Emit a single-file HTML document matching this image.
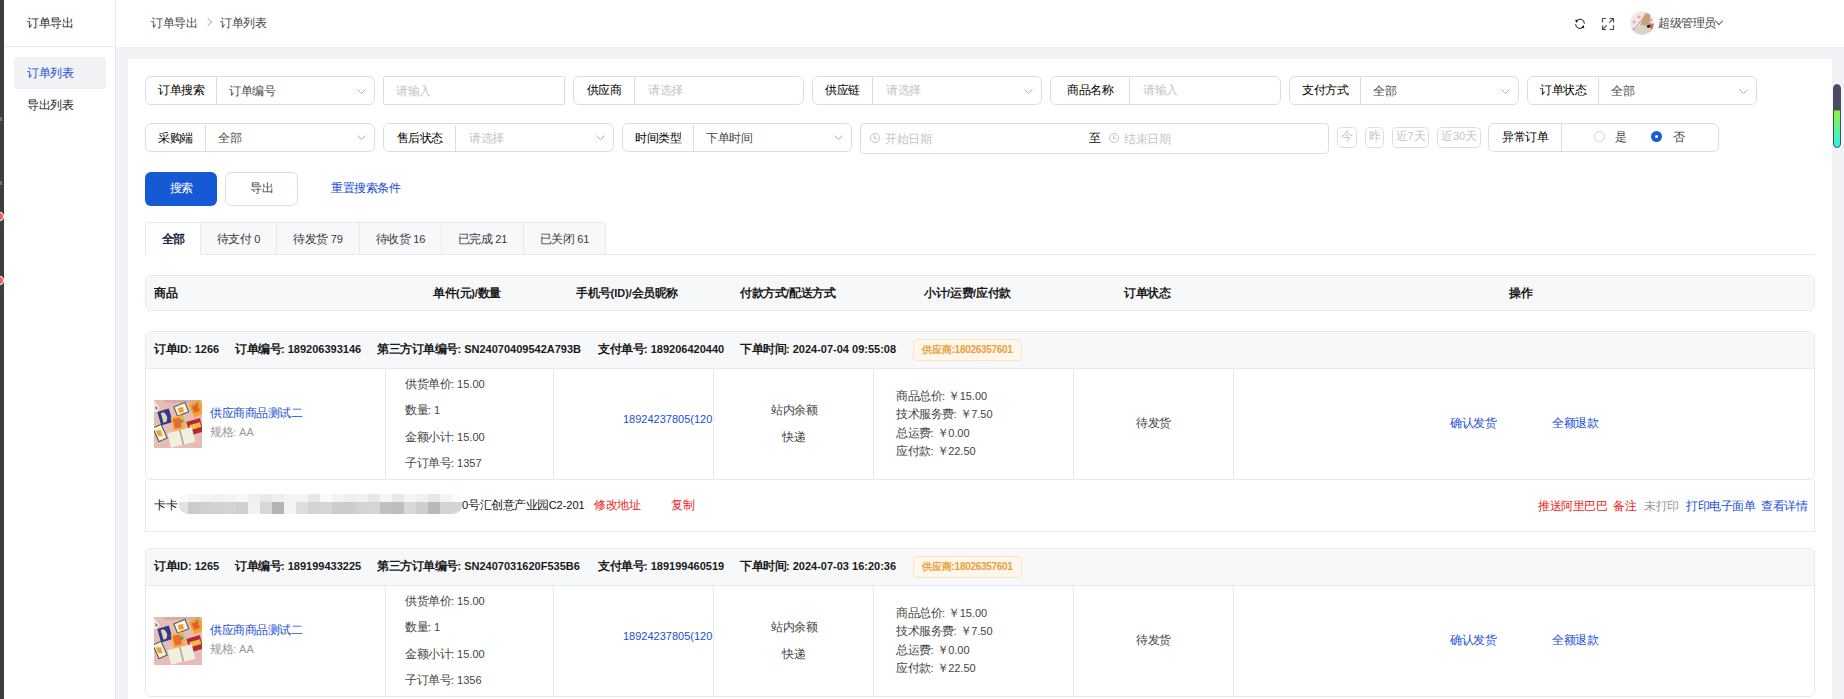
<!DOCTYPE html><html><head><meta charset="utf-8"><style>*{box-sizing:border-box;margin:0;padding:0}
html,body{width:1844px;height:699px;overflow:hidden;background:#f0f2f5}
body{font-family:"Liberation Sans",sans-serif;font-size:12px;color:#515a6e;position:relative;letter-spacing:-0.5px}
.a{position:absolute}
.t{position:absolute;white-space:nowrap;line-height:14px}
.n{font-size:11px;letter-spacing:0}
.c0{color:#111}
.c1{color:#222}
.c2{color:#444}
.ph{color:#c0c4cc}
.gray{color:#999}
.blue{color:#1a4ed8}
.red{color:#f01818}
.hb{font-weight:bold;color:#1a1a1a}
.grp{position:absolute;border:1px solid #dcdee2;border-radius:6px;background:#fff}
.grp .lb{position:absolute;left:0;top:-1px;bottom:0;border-right:1px solid #dcdee2;color:#000;text-align:center}
.grp .vl{position:absolute;top:-1px;color:#4a4a4a}
.grp .ph{position:absolute;top:-1px;color:#c0c4cc}
.arr{position:absolute;width:6px;height:6px;border-right:1px solid #a8abb2;border-bottom:1px solid #a8abb2;transform:rotate(45deg)}
.clk{width:10px;height:10px;border:1px solid #c0c4cc;border-radius:50%}
.clk:after{content:"";position:absolute;left:3px;top:1px;width:2px;height:3px;border-left:1px solid #c0c4cc;border-bottom:1px solid #c0c4cc}
.sbtn{border:1px solid #dcdee2;border-radius:5px;color:#c0c4cc;text-align:center;line-height:17px}
.tab{position:absolute;top:222px;border:1px solid #e8eaec;border-bottom:none;text-align:center;line-height:32px;color:#3a3a3a}
.tab.act{font-weight:bold;color:#17233d}
.tag{position:absolute;height:22px;border:1px solid #fde3c3;background:#fff6ec;border-radius:4px;color:#e9a03c;font-size:10px;font-weight:bold;letter-spacing:-0.3px;line-height:20px;text-align:center}
</style></head><body>
<div class="a" style="left:0px;top:0px;width:4px;height:699px;background:#3e3e3e"></div>
<div class="a" style="left:0px;top:181px;width:2px;height:4px;background:#6e6e6e"></div>
<div class="a" style="left:0px;top:117px;width:2px;height:4px;background:#6e6e6e"></div>
<div class="a" style="left:-4px;top:212px;width:8px;height:9px;border-radius:50%;background:#f26060;border:1px solid #fff"></div>
<div class="a" style="left:-4px;top:276px;width:8px;height:9px;border-radius:50%;background:#f26060;border:1px solid #fff"></div>
<div class="a" style="left:4px;top:0px;width:111px;height:699px;background:#fff"></div>
<div class="a" style="left:115px;top:0px;width:1px;height:699px;background:#e8eaec"></div>
<div class="a" style="left:4px;top:46px;width:111px;height:1px;background:#e8eaec"></div>
<div class="t c1" style="left:27px;top:16px;">订单导出</div>
<div class="a" style="left:14px;top:57px;width:92px;height:32px;background:#f0f2f5;border-radius:3px"></div>
<div class="t blue" style="left:27px;top:66px;">订单列表</div>
<div class="t c1" style="left:27px;top:98px;">导出列表</div>
<div class="a" style="left:116px;top:0px;width:1728px;height:47px;background:#fff"></div>
<div class="t c2" style="left:151px;top:16px;">订单导出</div>
<div class="a" style="left:205px;top:19px;width:6px;height:6px;border-top:1px solid #b8bcc4;border-right:1px solid #b8bcc4;transform:rotate(45deg)"></div>
<div class="t c2" style="left:220px;top:16px;">订单列表</div>
<svg class="a" style="left:1574px;top:18px" width="12" height="12" viewBox="0 0 12 12" fill="none" stroke="#1b1b2a" stroke-width="1">
<path d="M2.3 3.2 A4.4 4.4 0 0 1 10.4 5.6"/>
<path d="M9.6 8.6 A4.4 4.4 0 0 1 1.6 6.2"/>
<path d="M1.2 1.8 L4.6 2.2 L2.2 5.0Z" fill="#1b1b2a" stroke="none"/>
<path d="M10.4 10.2 L7.0 9.8 L9.6 7.0Z" fill="#1b1b2a" stroke="none"/></svg>
<svg class="a" style="left:1601px;top:17px" width="14" height="14" viewBox="0 0 14 14" fill="none" stroke="#505050" stroke-width="1.2">
<path d="M1.5 5.5V1.5H5"/><path d="M8.5 1.5H12.5V5.5"/><path d="M12.5 8V12.5H8.5"/><path d="M5 12.5H1.5V8.5"/>
<path d="M8.3 5.7L12.3 1.7"/><path d="M5.7 8.3L1.7 12.3"/></svg>
<svg class="a" style="left:1630px;top:11px" width="24" height="24" viewBox="0 0 24 24">
<defs><clipPath id="av"><circle cx="12" cy="12" r="11.8"/></clipPath></defs>
<g clip-path="url(#av)">
<rect width="24" height="24" fill="#f1e6e6"/>
<circle cx="9" cy="6" r="1.6" fill="#eea4a4"/><circle cx="4" cy="11" r="1.5" fill="#eea4a4"/><circle cx="3.5" cy="18" r="1.3" fill="#eea4a4"/><circle cx="21" cy="9" r="1.5" fill="#eea4a4"/>
<path d="M2 21 L17 2" stroke="#9aa2b4" stroke-width="1"/>
<path d="M15 2.5 L20.5 3 L19.5 12 L14 16 L10 14Z" fill="#c8a07a"/>
<path d="M2 24 L7 16 L12 13.5 L18 16 L22 22 L23 24Z" fill="#dbd4c6"/>
<path d="M19 12 L24 13 L24 24 L18 23 L21 19Z" fill="#b47c52"/>
<circle cx="18.6" cy="15.2" r="1.8" fill="#2c221e"/>
</g></svg>
<div class="t c2" style="left:1658px;top:16px;">超级管理员</div>
<div class="a" style="left:1716px;top:18px;width:6px;height:6px;border-right:1px solid #666;border-bottom:1px solid #666;transform:rotate(45deg)"></div>
<div class="a" style="left:128px;top:59px;width:1704px;height:640px;background:#fff"></div>
<div class="grp" style="left:145px;top:76px;width:230px;height:29px">
<div class="lb" style="width:71px;line-height:27px;top:0px">订单搜索</div>
<div class="vl" style="left:83px;line-height:27px;top:1px">订单编号</div>
<svg class="a" style="left:211px;top:12px" width="9" height="5" viewBox="0 0 9 5"><path d="M0.5 0.5L4.5 4.5L8.5 0.5" fill="none" stroke="#a9aeb8" stroke-width="1"/></svg>
</div>
<div class="a" style="left:383px;top:76px;width:182px;height:29px;border:1px solid #dcdee2;border-radius:2px"></div>
<div class="t ph" style="left:396px;top:84px;">请输入</div>
<div class="grp" style="left:573px;top:76px;width:231px;height:29px">
<div class="lb" style="width:61px;line-height:27px;top:0px">供应商</div>
<div class="ph" style="left:74px;line-height:27px;top:0px">请选择</div>
</div>
<div class="grp" style="left:812px;top:76px;width:230px;height:29px">
<div class="lb" style="width:60px;line-height:27px;top:0px">供应链</div>
<div class="ph" style="left:73px;line-height:27px;top:0px">请选择</div>
<svg class="a" style="left:211px;top:12px" width="9" height="5" viewBox="0 0 9 5"><path d="M0.5 0.5L4.5 4.5L8.5 0.5" fill="none" stroke="#a9aeb8" stroke-width="1"/></svg>
</div>
<div class="grp" style="left:1050px;top:76px;width:231px;height:29px">
<div class="lb" style="width:79px;line-height:27px;top:0px">商品名称</div>
<div class="ph" style="left:92px;line-height:27px;top:0px">请输入</div>
</div>
<div class="grp" style="left:1289px;top:76px;width:230px;height:29px">
<div class="lb" style="width:71px;line-height:27px;top:0px">支付方式</div>
<div class="vl" style="left:83px;line-height:27px;top:1px">全部</div>
<svg class="a" style="left:211px;top:12px" width="9" height="5" viewBox="0 0 9 5"><path d="M0.5 0.5L4.5 4.5L8.5 0.5" fill="none" stroke="#a9aeb8" stroke-width="1"/></svg>
</div>
<div class="grp" style="left:1527px;top:76px;width:230px;height:29px">
<div class="lb" style="width:71px;line-height:27px;top:0px">订单状态</div>
<div class="vl" style="left:83px;line-height:27px;top:1px">全部</div>
<svg class="a" style="left:211px;top:12px" width="9" height="5" viewBox="0 0 9 5"><path d="M0.5 0.5L4.5 4.5L8.5 0.5" fill="none" stroke="#a9aeb8" stroke-width="1"/></svg>
</div>
<div class="grp" style="left:145px;top:123px;width:230px;height:29px">
<div class="lb" style="width:60px;line-height:27px;top:1px">采购端</div>
<div class="vl" style="left:72px;line-height:27px;top:1px">全部</div>
<svg class="a" style="left:211px;top:11px" width="9" height="5" viewBox="0 0 9 5"><path d="M0.5 0.5L4.5 4.5L8.5 0.5" fill="none" stroke="#a9aeb8" stroke-width="1"/></svg>
</div>
<div class="grp" style="left:383px;top:123px;width:231px;height:29px">
<div class="lb" style="width:72px;line-height:27px;top:1px">售后状态</div>
<div class="ph" style="left:85px;line-height:27px;top:1px">请选择</div>
<svg class="a" style="left:212px;top:11px" width="9" height="5" viewBox="0 0 9 5"><path d="M0.5 0.5L4.5 4.5L8.5 0.5" fill="none" stroke="#a9aeb8" stroke-width="1"/></svg>
</div>
<div class="grp" style="left:622px;top:123px;width:230px;height:29px">
<div class="lb" style="width:71px;line-height:27px;top:1px">时间类型</div>
<div class="vl" style="left:83px;line-height:27px;top:1px">下单时间</div>
<svg class="a" style="left:211px;top:11px" width="9" height="5" viewBox="0 0 9 5"><path d="M0.5 0.5L4.5 4.5L8.5 0.5" fill="none" stroke="#a9aeb8" stroke-width="1"/></svg>
</div>
<div class="a" style="left:860px;top:123px;width:469px;height:31px;border:1px solid #dcdee2;border-radius:4px"></div>
<div class="a clk" style="left:870px;top:133px"></div>
<div class="t ph" style="left:885px;top:132px;">开始日期</div>
<div class="t c0" style="left:1089px;top:131px;">至</div>
<div class="a clk" style="left:1109px;top:133px"></div>
<div class="t ph" style="left:1124px;top:132px;">结束日期</div>
<div class="a sbtn" style="left:1337px;top:127px;width:20px;height:21px">今</div>
<div class="a sbtn" style="left:1365px;top:127px;width:19px;height:21px">昨</div>
<div class="a sbtn" style="left:1392px;top:127px;width:37px;height:21px">近<span class="n">7</span>天</div>
<div class="a sbtn" style="left:1437px;top:127px;width:44px;height:21px">近<span class="n">30</span>天</div>
<div class="grp" style="left:1488px;top:123px;width:231px;height:29px">
<div class="lb" style="width:73px;line-height:27px;top:0px">异常订单</div>
</div>
<div class="a" style="left:1594px;top:131px;width:11px;height:11px;border:1px solid #d0d3d8;border-radius:50%;background:#fff"></div>
<div class="t c2" style="left:1615px;top:130px;">是</div>
<div class="a" style="left:1651px;top:131px;width:11px;height:11px;border:4px solid #1a5bd6;border-radius:50%;background:#fff"></div>
<div class="t c2" style="left:1673px;top:130px;">否</div>
<div class="a" style="left:145px;top:172px;width:72px;height:34px;background:#1659d5;border-radius:6px;color:#fff;text-align:center;line-height:32px">搜索</div>
<div class="a" style="left:225px;top:172px;width:73px;height:34px;border:1px solid #dcdee2;border-radius:6px;color:#444;text-align:center;line-height:31px">导出</div>
<div class="t blue" style="left:331px;top:181px;">重置搜索条件</div>
<div class="a" style="left:145px;top:254px;width:1670px;height:1px;background:#e8eaec"></div>
<div class="tab act" style="left:145px;width:56px;height:33px;background:#fff;border-radius:4px 0 0 0;">全部</div>
<div class="tab" style="left:200px;width:77px;height:32px;background:#f7f8fa;">待支付<span class="n"> 0</span></div>
<div class="tab" style="left:276px;width:84px;height:32px;background:#f7f8fa;">待发货<span class="n"> 79</span></div>
<div class="tab" style="left:359px;width:83px;height:32px;background:#f7f8fa;">待收货<span class="n"> 16</span></div>
<div class="tab" style="left:441px;width:83px;height:32px;background:#f7f8fa;">已完成<span class="n"> 21</span></div>
<div class="tab" style="left:523px;width:83px;height:32px;background:#f7f8fa;border-radius:0 4px 0 0;">已关闭<span class="n"> 61</span></div>
<div class="a" style="left:145px;top:275px;width:1670px;height:36px;background:#f7f8fa;border:1px solid #e8eaec;border-radius:6px"></div>
<div class="t hb" style="left:154px;top:286px;">商品</div>
<div class="t hb" style="left:433px;top:286px;">单件<span class="n">(</span>元<span class="n">)/</span>数量</div>
<div class="t hb" style="left:576px;top:286px;">手机号<span class="n">(ID)/</span>会员昵称</div>
<div class="t hb" style="left:740px;top:286px;">付款方式<span class="n">/</span>配送方式</div>
<div class="t hb" style="left:924px;top:286px;">小计<span class="n">/</span>运费<span class="n">/</span>应付款</div>
<div class="t hb" style="left:1124px;top:286px;">订单状态</div>
<div class="t hb" style="left:1509px;top:286px;">操作</div>
<div class="a" style="left:145px;top:331px;width:1670px;height:149px;border:1px solid #e8eaec;border-radius:6px;background:#fff;overflow:hidden">
<div class="a" style="left:0;top:0;width:1668px;height:37px;background:#f7f8fa;border-bottom:1px solid #e8eaec"></div>
<div class="a" style="left:239px;top:37px;width:1px;height:111px;background:#e8eaec"></div>
<div class="a" style="left:407px;top:37px;width:1px;height:111px;background:#e8eaec"></div>
<div class="a" style="left:567px;top:37px;width:1px;height:111px;background:#e8eaec"></div>
<div class="a" style="left:727px;top:37px;width:1px;height:111px;background:#e8eaec"></div>
<div class="a" style="left:927px;top:37px;width:1px;height:111px;background:#e8eaec"></div>
<div class="a" style="left:1087px;top:37px;width:1px;height:111px;background:#e8eaec"></div>
</div>
<div class="t hb" style="left:154px;top:342px;">订单<span class="n">ID: 1266</span></div>
<div class="t hb" style="left:235px;top:342px;">订单编号<span class="n">: 189206393146</span></div>
<div class="t hb" style="left:377px;top:342px;">第三方订单编号<span class="n">: SN24070409542A793B</span></div>
<div class="t hb" style="left:598px;top:342px;">支付单号<span class="n">: 189206420440</span></div>
<div class="t hb" style="left:740px;top:342px;">下单时间<span class="n">: 2024-07-04 09:55:08</span></div>
<div class="tag" style="left:913px;top:339px;width:109px">供应商:18026357601</div>
<svg class="a" style="left:154px;top:400px;filter:blur(0.35px)" width="48" height="48" viewBox="0 0 48 48">
<rect width="48" height="48" fill="#e8bcb6"/>
<rect x="10" y="0" width="34" height="3" fill="#dcaaa4"/>
<path d="M0 1 L6 8 L3 12 L0 12Z" fill="#efe9e0"/><path d="M1 6 L4 8 L2 10Z" fill="#9a6a48"/>
<g transform="rotate(-16 11 17)"><rect x="5" y="10" width="12" height="14" fill="#2d3b8e"/><path d="M8 12 h3 q4 5 0 10 h-3z" fill="#e6d4b0"/></g>
<g transform="rotate(-22 27 10)"><rect x="21" y="4" width="13" height="11" fill="#3b5a44"/><rect x="22" y="5" width="11" height="9" fill="#f7f3ea"/><path d="M25 7 L30 8 L29 13 L24 12Z" fill="#f09a30"/></g>
<g transform="rotate(-25 42 9)"><rect x="37" y="2" width="12" height="14" fill="#f2a22e"/><rect x="39" y="5" width="6" height="7" fill="#e5602e"/><rect x="44" y="4" width="2" height="3" fill="#5a9a66"/></g>
<g transform="rotate(-12 24 24)"><rect x="18" y="16" width="13" height="16" fill="#f3b04c"/><rect x="20" y="18" width="7" height="10" fill="#ea6a36"/><circle cx="28" cy="22" r="1.8" fill="#5d9b6c"/></g>
<g transform="rotate(-16 40 27)"><rect x="34" y="20" width="14" height="14" fill="#b42a2e"/><rect x="36" y="24" width="11" height="5" fill="#f0bd48"/></g>
<g transform="rotate(-24 6 33)"><rect x="1" y="25" width="10" height="16" fill="#345a44"/><rect x="2" y="26" width="8" height="14" fill="#f6f0e2"/><path d="M3 29 L8 31 L7 37 L3 35Z" fill="#f0a02e"/></g>
<g transform="rotate(-14 27 38)"><rect x="15" y="30" width="25" height="15" fill="#f2eee0"/><rect x="27" y="30" width="1.5" height="15" fill="#aaa494"/></g>
</svg>
<div class="t blue" style="left:210px;top:406px;">供应商商品测试二</div>
<div class="t gray" style="left:210px;top:425px;">规格<span class="n">: AA</span></div>
<div class="t c2" style="left:405px;top:377px;">供货单价<span class="n">: 15.00</span></div>
<div class="t c2" style="left:405px;top:403px;">数量<span class="n">: 1</span></div>
<div class="t c2" style="left:405px;top:430px;">金额小计<span class="n">: 15.00</span></div>
<div class="t c2" style="left:405px;top:456px;">子订单号<span class="n">: 1357</span></div>
<div class="a" style="left:554px;top:368px;width:159px;height:110px;overflow:hidden">
<div class="t blue" style="left:69px;top:44px"><span class="n">18924237805(120</span></div></div>
<div class="t c2" style="left:771px;top:403px;">站内余额</div>
<div class="t c2" style="left:782px;top:430px;">快递</div>
<div class="t c2" style="left:896px;top:389px;">商品总价<span class="n">: </span>￥<span class="n">15.00</span></div>
<div class="t c2" style="left:896px;top:407px;">技术服务费<span class="n">: </span>￥<span class="n">7.50</span></div>
<div class="t c2" style="left:896px;top:426px;">总运费<span class="n">: </span>￥<span class="n">0.00</span></div>
<div class="t c2" style="left:896px;top:444px;">应付款<span class="n">: </span>￥<span class="n">22.50</span></div>
<div class="t c2" style="left:1136px;top:416px;">待发货</div>
<div class="t blue" style="left:1450px;top:416px;">确认发货</div>
<div class="t blue" style="left:1552px;top:416px;">全额退款</div>
<div class="a" style="left:145px;top:480px;width:1670px;height:52px;border:1px solid #e8eaec;border-top:none;background:#fff"></div>
<div class="t c0" style="left:154px;top:498px;">卡卡</div>
<svg class="a" style="left:176px;top:494px" width="290" height="21" viewBox="0 0 290 21"><defs><clipPath id="bl"><rect x="3" y="0" width="283" height="20" rx="9"/></clipPath></defs><g clip-path="url(#bl)"><rect x="0" y="0" width="12" height="8" fill="#fafafa"/><rect x="0" y="8" width="12" height="12" fill="#e2e2e2"/><rect x="12" y="0" width="12" height="8" fill="#f6f6f6"/><rect x="12" y="8" width="12" height="12" fill="#cbcacc"/><rect x="24" y="0" width="12" height="8" fill="#f4f4f4"/><rect x="24" y="8" width="12" height="12" fill="#d0d0d0"/><rect x="36" y="0" width="12" height="8" fill="#f2f2f2"/><rect x="36" y="8" width="12" height="12" fill="#d2d2d2"/><rect x="48" y="0" width="12" height="8" fill="#f5f5f5"/><rect x="48" y="8" width="12" height="12" fill="#d3d3d3"/><rect x="60" y="0" width="12" height="8" fill="#f7f7f7"/><rect x="60" y="8" width="12" height="12" fill="#d0d0d2"/><rect x="72" y="0" width="12" height="8" fill="#f0f0f0"/><rect x="72" y="8" width="12" height="12" fill="#f2f2f2"/><rect x="84" y="0" width="12" height="8" fill="#e9e9e9"/><rect x="84" y="8" width="12" height="12" fill="#d8d8d8"/><rect x="96" y="0" width="12" height="8" fill="#eeeeee"/><rect x="96" y="8" width="12" height="12" fill="#b4b4b4"/><rect x="108" y="0" width="12" height="8" fill="#f3f3f3"/><rect x="108" y="8" width="12" height="12" fill="#f3f3f3"/><rect x="120" y="0" width="12" height="8" fill="#f2f4f2"/><rect x="120" y="8" width="12" height="12" fill="#dcdedc"/><rect x="132" y="0" width="12" height="8" fill="#e8e8e8"/><rect x="132" y="8" width="12" height="12" fill="#d6d3d3"/><rect x="144" y="0" width="12" height="8" fill="#fafafa"/><rect x="144" y="8" width="12" height="12" fill="#d5d6d5"/><rect x="156" y="0" width="12" height="8" fill="#f3f3f3"/><rect x="156" y="8" width="12" height="12" fill="#cccccc"/><rect x="168" y="0" width="12" height="8" fill="#efefef"/><rect x="168" y="8" width="12" height="12" fill="#cdcbcb"/><rect x="180" y="0" width="12" height="8" fill="#f2f2f2"/><rect x="180" y="8" width="12" height="12" fill="#d3d3d2"/><rect x="192" y="0" width="12" height="8" fill="#e8e8e8"/><rect x="192" y="8" width="12" height="12" fill="#d3d6d8"/><rect x="204" y="0" width="12" height="8" fill="#f6f6f6"/><rect x="204" y="8" width="12" height="12" fill="#c0c0c0"/><rect x="216" y="0" width="12" height="8" fill="#e8e8e8"/><rect x="216" y="8" width="12" height="12" fill="#bfbebe"/><rect x="228" y="0" width="12" height="8" fill="#f4f4f4"/><rect x="228" y="8" width="12" height="12" fill="#d7d7dc"/><rect x="240" y="0" width="12" height="8" fill="#f0f0f0"/><rect x="240" y="8" width="12" height="12" fill="#cdcfca"/><rect x="252" y="0" width="12" height="8" fill="#e6e8e8"/><rect x="252" y="8" width="12" height="12" fill="#b8b8b8"/><rect x="264" y="0" width="12" height="8" fill="#f4f4f4"/><rect x="264" y="8" width="12" height="12" fill="#d3d2d8"/><rect x="276" y="0" width="12" height="8" fill="#fafafa"/><rect x="276" y="8" width="12" height="12" fill="#d4d6d2"/></g></svg>
<div class="t c0" style="left:462px;top:498px;"><span class="n">0</span>号汇创意产业园<span class="n">C2-201</span></div>
<div class="t red" style="left:594px;top:498px;">修改地址</div>
<div class="t red" style="left:671px;top:498px;">复制</div>
<div class="t red" style="left:1538px;top:499px;">推送阿里巴巴</div>
<div class="t red" style="left:1613px;top:499px;">备注</div>
<div class="t gray" style="left:1644px;top:499px;">未打印</div>
<div class="t blue" style="left:1686px;top:499px;">打印电子面单</div>
<div class="t blue" style="left:1761px;top:499px;">查看详情</div>
<div class="a" style="left:145px;top:548px;width:1670px;height:149px;border:1px solid #e8eaec;border-radius:6px;background:#fff;overflow:hidden">
<div class="a" style="left:0;top:0;width:1668px;height:37px;background:#f7f8fa;border-bottom:1px solid #e8eaec"></div>
<div class="a" style="left:239px;top:37px;width:1px;height:111px;background:#e8eaec"></div>
<div class="a" style="left:407px;top:37px;width:1px;height:111px;background:#e8eaec"></div>
<div class="a" style="left:567px;top:37px;width:1px;height:111px;background:#e8eaec"></div>
<div class="a" style="left:727px;top:37px;width:1px;height:111px;background:#e8eaec"></div>
<div class="a" style="left:927px;top:37px;width:1px;height:111px;background:#e8eaec"></div>
<div class="a" style="left:1087px;top:37px;width:1px;height:111px;background:#e8eaec"></div>
</div>
<div class="t hb" style="left:154px;top:559px;">订单<span class="n">ID: 1265</span></div>
<div class="t hb" style="left:235px;top:559px;">订单编号<span class="n">: 189199433225</span></div>
<div class="t hb" style="left:377px;top:559px;">第三方订单编号<span class="n">: SN2407031620F535B6</span></div>
<div class="t hb" style="left:598px;top:559px;">支付单号<span class="n">: 189199460519</span></div>
<div class="t hb" style="left:740px;top:559px;">下单时间<span class="n">: 2024-07-03 16:20:36</span></div>
<div class="tag" style="left:913px;top:556px;width:109px">供应商:18026357601</div>
<svg class="a" style="left:154px;top:617px;filter:blur(0.35px)" width="48" height="48" viewBox="0 0 48 48">
<rect width="48" height="48" fill="#e8bcb6"/>
<rect x="10" y="0" width="34" height="3" fill="#dcaaa4"/>
<path d="M0 1 L6 8 L3 12 L0 12Z" fill="#efe9e0"/><path d="M1 6 L4 8 L2 10Z" fill="#9a6a48"/>
<g transform="rotate(-16 11 17)"><rect x="5" y="10" width="12" height="14" fill="#2d3b8e"/><path d="M8 12 h3 q4 5 0 10 h-3z" fill="#e6d4b0"/></g>
<g transform="rotate(-22 27 10)"><rect x="21" y="4" width="13" height="11" fill="#3b5a44"/><rect x="22" y="5" width="11" height="9" fill="#f7f3ea"/><path d="M25 7 L30 8 L29 13 L24 12Z" fill="#f09a30"/></g>
<g transform="rotate(-25 42 9)"><rect x="37" y="2" width="12" height="14" fill="#f2a22e"/><rect x="39" y="5" width="6" height="7" fill="#e5602e"/><rect x="44" y="4" width="2" height="3" fill="#5a9a66"/></g>
<g transform="rotate(-12 24 24)"><rect x="18" y="16" width="13" height="16" fill="#f3b04c"/><rect x="20" y="18" width="7" height="10" fill="#ea6a36"/><circle cx="28" cy="22" r="1.8" fill="#5d9b6c"/></g>
<g transform="rotate(-16 40 27)"><rect x="34" y="20" width="14" height="14" fill="#b42a2e"/><rect x="36" y="24" width="11" height="5" fill="#f0bd48"/></g>
<g transform="rotate(-24 6 33)"><rect x="1" y="25" width="10" height="16" fill="#345a44"/><rect x="2" y="26" width="8" height="14" fill="#f6f0e2"/><path d="M3 29 L8 31 L7 37 L3 35Z" fill="#f0a02e"/></g>
<g transform="rotate(-14 27 38)"><rect x="15" y="30" width="25" height="15" fill="#f2eee0"/><rect x="27" y="30" width="1.5" height="15" fill="#aaa494"/></g>
</svg>
<div class="t blue" style="left:210px;top:623px;">供应商商品测试二</div>
<div class="t gray" style="left:210px;top:642px;">规格<span class="n">: AA</span></div>
<div class="t c2" style="left:405px;top:594px;">供货单价<span class="n">: 15.00</span></div>
<div class="t c2" style="left:405px;top:620px;">数量<span class="n">: 1</span></div>
<div class="t c2" style="left:405px;top:647px;">金额小计<span class="n">: 15.00</span></div>
<div class="t c2" style="left:405px;top:673px;">子订单号<span class="n">: 1356</span></div>
<div class="a" style="left:554px;top:585px;width:159px;height:110px;overflow:hidden">
<div class="t blue" style="left:69px;top:44px"><span class="n">18924237805(120</span></div></div>
<div class="t c2" style="left:771px;top:620px;">站内余额</div>
<div class="t c2" style="left:782px;top:647px;">快递</div>
<div class="t c2" style="left:896px;top:606px;">商品总价<span class="n">: </span>￥<span class="n">15.00</span></div>
<div class="t c2" style="left:896px;top:624px;">技术服务费<span class="n">: </span>￥<span class="n">7.50</span></div>
<div class="t c2" style="left:896px;top:643px;">总运费<span class="n">: </span>￥<span class="n">0.00</span></div>
<div class="t c2" style="left:896px;top:661px;">应付款<span class="n">: </span>￥<span class="n">22.50</span></div>
<div class="t c2" style="left:1136px;top:633px;">待发货</div>
<div class="t blue" style="left:1450px;top:633px;">确认发货</div>
<div class="t blue" style="left:1552px;top:633px;">全额退款</div>
<div class="a" style="left:1832px;top:83px;width:10px;height:66px;border-radius:5px;background:#f4f4f6"></div>
<div class="a" style="left:1833px;top:84px;width:8px;height:64px;border-radius:4px;border:1px solid #4a4a66;background:linear-gradient(#4a4a66 0,#4a4a66 25px,#86f73a 26px,#2cf4ee 62px)"></div>
</body></html>
